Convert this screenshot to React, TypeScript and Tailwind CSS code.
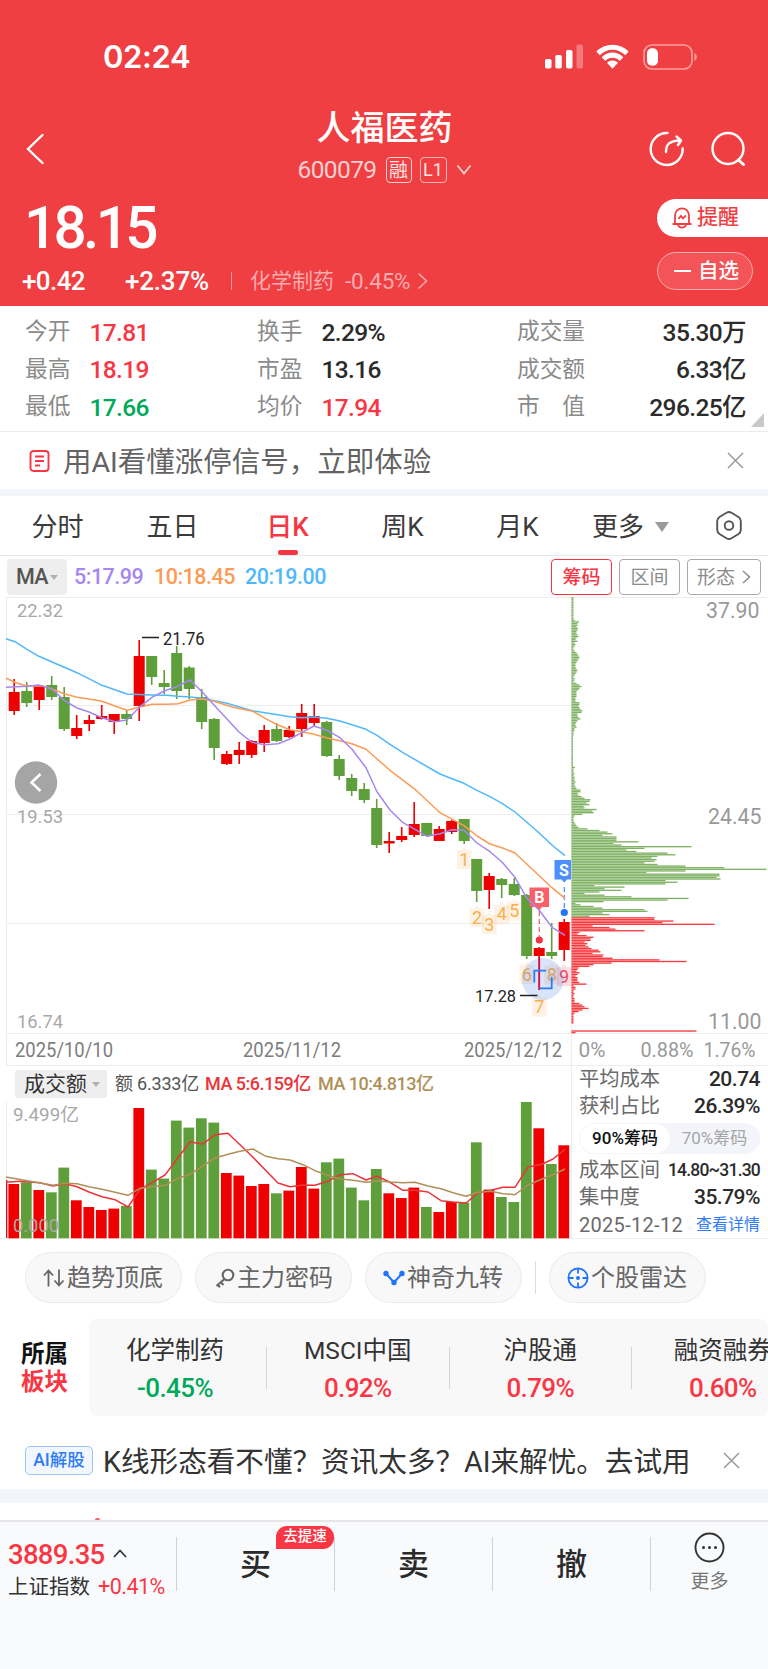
import React from 'react';
import clsx from 'clsx';

type Point = [number, number];

// [up, high, body top, body bottom, low, turnover bar height]
type Candle = [number, number, number, number, number, number];

const candles: Candle[] = [
  [1, 679, 692, 711, 715, 54.3],
  [0, 682, 691, 703, 707, 56],
  [1, 685, 686, 700, 710, 48.3],
  [0, 676, 685, 697, 700, 46],
  [0, 687, 697, 729, 731, 70.7],
  [1, 715, 728, 736, 739, 38],
  [1, 715, 720, 724, 731, 31.3],
  [1, 705, 716, 719, 719.5, 28.3],
  [1, 714, 714, 722, 734, 29.7],
  [0, 710, 714, 719, 725, 32.3],
  [1, 640, 656, 706, 721, 130.3],
  [0, 656, 656, 677, 685, 68.7],
  [0, 670, 683, 687, 694, 59.7],
  [0, 646, 653, 691, 699, 117.7],
  [0, 666, 667.5, 689, 699, 110.7],
  [0, 689, 697, 722, 729, 120],
  [0, 718, 719, 748, 760, 115.7],
  [1, 751, 754, 764, 765, 65.3],
  [1, 742, 750, 755, 764, 62.7],
  [1, 740, 741, 755, 758, 52.3],
  [1, 725, 730, 743, 752, 54.3],
  [0, 723, 729, 741, 742, 45],
  [1, 726, 730, 737, 738, 47.7],
  [1, 704, 713, 729, 737, 71.3],
  [1, 704, 716, 723, 727, 49.7],
  [0, 721, 722, 756, 757, 76],
  [0, 755, 759, 776, 780, 79.7],
  [0, 774, 778, 791, 796, 50.7],
  [0, 783, 789, 800, 803, 38],
  [0, 799, 808, 845, 848, 69.3],
  [1, 832, 841, 843.5, 853, 45],
  [1, 827, 836, 840, 842, 40.3],
  [1, 802, 824, 835, 837, 50.7],
  [0, 823, 823, 836, 836, 31.3],
  [1, 826, 829, 841, 841, 26.3],
  [1, 820, 821, 832, 834, 36.3],
  [0, 819, 819, 841, 844, 35.7],
  [0, 859, 859, 891, 902, 96],
  [1, 873, 876, 890, 909, 48.7],
  [0, 878, 879, 885, 898, 41.3],
  [0, 878, 884, 895, 896, 36.3],
  [0, 894, 895, 956, 959, 138.3],
  [1, 947, 948, 956, 990, 110],
  [0, 923, 952, 956, 959, 74.3],
  [1, 919, 922, 950, 961, 93],
];

const ma5: Point[] = [
  [6, 687.3], [27, 686.3], [39, 685], [52, 689], [64, 700.3], [77, 708], [89, 712], [102, 717.7], [115, 721.7],
  [127, 720], [140, 706.7], [152, 697.3], [164, 691], [177, 686.7], [190, 680], [202, 691.7], [217, 708.3],
  [227, 719], [239, 732], [252, 742.3], [265, 744.7], [278, 743.7], [290, 739], [302, 732.3], [314, 726],
  [327, 730.3], [340, 737.7], [352, 749.3], [366, 767.7], [377, 791.7], [390, 810], [403, 822.7], [415, 829.3],
  [427, 836.3], [440, 833.7], [452, 829.7], [464, 830.3], [477, 843], [490, 851.7], [502, 862], [515, 877.3],
  [527, 898.3], [539, 910], [552, 927.3], [565, 935.3],
];

const ma10: Point[] = [
  [6, 678.3], [16, 682.7], [27, 686], [42, 685.7], [52, 689], [64, 693.7], [77, 697.3], [89, 699], [102, 701.3],
  [115, 706], [127, 710.3], [140, 707], [152, 704.3], [167, 704.3], [178, 703.7], [190, 700], [202, 699],
  [214, 701.3], [233, 707.3], [253, 711.3], [265, 718.3], [278, 725], [290, 729.7], [302, 731.7], [314, 734.3],
  [327, 738], [340, 740.7], [352, 743.7], [366, 749.3], [390, 770.3], [415, 789.3], [440, 812.7], [464, 825.7],
  [477, 836], [490, 844], [502, 847.7], [515, 853], [552, 887.7], [565, 898.3],
];

const ma20: Point[] = [
  [6, 638.7], [15, 641.7], [27, 649.3], [39, 656.3], [52, 662], [77, 672.7], [102, 685.3], [127, 694], [152, 695],
  [167, 695.3], [178, 696.3], [190, 697], [202, 698.3], [227, 703.3], [252, 710.7], [265, 712.7], [290, 716.7],
  [302, 717.7], [314, 717], [327, 718.3], [340, 721], [352, 724.7], [366, 729.3], [377, 735.3], [390, 744.3],
  [403, 752.7], [440, 774], [452, 778.7], [464, 783.3], [477, 790.3], [490, 796.7], [502, 803.3], [515, 812],
  [537, 831], [553, 846], [565, 855.7],
];

const turnoverMa5: Point[] = [
  [6, 1182.3], [20, 1181.3], [40, 1182.7], [53, 1186], [65, 1183.7], [77, 1186.7], [89, 1192], [102, 1196.7],
  [115, 1199.7], [128, 1207], [140, 1189.3], [152, 1182.7], [165, 1175], [178, 1157.7], [190, 1142], [203, 1144],
  [215, 1134.7], [228, 1133.3], [240, 1144.7], [252, 1156.3], [278, 1183], [290, 1186.7], [303, 1185],
  [315, 1185.3], [328, 1181.3], [340, 1174.7], [353, 1173.7], [366, 1180], [377, 1176.3], [390, 1182.3],
  [403, 1190.3], [415, 1190.3], [428, 1192], [441, 1200.7], [453, 1202], [466, 1203], [478, 1193], [491, 1190.3],
  [503, 1187.3], [515, 1187.3], [528, 1167], [542, 1164.3], [553, 1159], [565, 1149.3],
];

const turnoverMa10: Point[] = [
  [6, 1177], [40, 1183], [53, 1185.3], [65, 1183.3], [77, 1183.7], [89, 1186.7], [102, 1189.3], [115, 1192.3],
  [128, 1195.3], [140, 1188.3], [152, 1186.7], [165, 1185.3], [178, 1178.3], [190, 1174.3], [215, 1158],
  [228, 1154.3], [240, 1151.3], [253, 1149], [266, 1156.3], [278, 1158.7], [290, 1160], [303, 1164.7],
  [315, 1170.7], [328, 1175.3], [340, 1179], [353, 1180.3], [366, 1182.3], [378, 1181], [390, 1182],
  [403, 1182.7], [415, 1182.3], [428, 1186], [441, 1188.7], [453, 1192.7], [466, 1196.3], [478, 1192.3],
  [491, 1191.3], [503, 1193.7], [515, 1194.7], [528, 1185], [542, 1179], [553, 1174.7], [565, 1169],
];

// Chip distribution, one bar per price step, from 37.90 down to 11.00
const chips: number[] = [
  2, 2, 2, 2, 2, 2, 2, 2, 2, 2, 2, 2, 2, 2, 3, 7.5, 6, 6, 5, 6.5, 6, 5, 5, 6, 7, 5, 4, 6, 3, 4,
  3, 2, 2, 3, 5, 6, 7, 8, 7, 6, 5, 4, 4, 4, 5, 6, 5, 4, 3, 2, 3, 3, 2, 5, 8, 10, 8, 7, 5, 5,
  5, 5, 4, 4, 4, 8, 8, 7, 8, 9, 11, 10, 6, 6, 7, 9, 6, 5, 4, 4, 5, 3, 3, 2, 2, 2, 1.5, 1.5, 1.5, 1.5,
  1.5, 1.5, 1.5, 1.5, 1.5, 1.5, 1.5, 1.5, 1.5, 1.5, 1.5, 1.5, 1.5, 1.5, 1.5, 3.5, 2, 2, 2, 3, 2, 3, 3, 3, 4, 3, 3, 4, 5, 9,
  9, 6, 7, 10, 13, 19, 18, 15, 18, 12, 13, 25, 21, 22, 11, 3, 2, 2, 2, 3, 4, 5, 7, 16, 28, 36, 41, 31, 45, 45,
  45, 67, 42, 50, 120, 73, 55, 65, 96, 104, 86, 80, 85, 83, 73, 86, 114, 153, 195, 114, 75, 148, 148, 145, 149, 94, 106, 94, 23, 53,
  33, 50, 28, 13, 33, 60, 117, 96, 32, 4, 9, 22, 31, 73, 76, 31, 38, 18, 83, 83, 102, 91, 143, 21, 38, 44, 73, 8, 6, 15,
  22, 19, 19, 13, 16, 14, 17, 20, 27, 29, 21, 32, 31, 41, 88, 115, 40, 22, 18, 7, 6, 5, 8, 6, 4, 6, 6, 6, 8, 15,
  2, 4, 4, 2, 2, 3, 2, 2, 3, 3, 3, 8, 11, 13, 17, 11, 7, 3, 2, 2, 2, 2, 2, 2, 0, 0, 0, 0, 125, 4,
];

const FIRST_PROFIT_CHIP = 198;

const nineTurns = [
  { n: '1', x: 464.3, y: 859 },
  { n: '2', x: 477, y: 917 },
  { n: '3', x: 489.3, y: 924 },
  { n: '4', x: 501.7, y: 913.7 },
  { n: '5', x: 514.3, y: 910.7 },
  { n: '6', x: 526.7, y: 974 },
  { n: '7', x: 539.3, y: 1006.7 },
  { n: '8', x: 551.7, y: 974.3 },
  { n: '9', x: 564, y: 976.3 },
];

const UP = '#ee0000';
const DOWN = '#5f9f3b';
const candleX = (i: number) => 14.2 + i * 12.5;
const toPoints = (pts: Point[]) => pts.map((p) => p.join(',')).join(' ');

interface LabelProps {
  x: number;
  y: number;
  w: number;
  size: number;
  fill: string;
  children: string;
}

// Chart label, x is the left edge and y the baseline
const Label: React.FC<LabelProps> = ({ x, y, w, size, fill, children }) => (
  <text x={x} y={y} fontSize={size} fill={fill} textLength={w} lengthAdjust="spacingAndGlyphs">
    {children}
  </text>
);

const StatusBar = () => (
  <div className="flex h-[113px] items-center justify-between pr-[70px] pl-[103px]">
    <span className="mt-[2px] font-['Inter'] text-[31px] font-semibold tracking-[-0.4px]">02:24</span>
    <svg width="153" height="26" viewBox="0 0 153 26" fill="white">
      <rect x="0" y="15" width="6.5" height="9.5" rx="1.8" />
      <rect x="10.3" y="11" width="6.5" height="13.5" rx="1.8" />
      <rect x="21" y="6" width="6.5" height="18.5" rx="1.8" />
      <rect x="31.5" y="0.5" width="6.5" height="24" rx="1.8" opacity="0.3" />
      <path d="M51.3 7.6a22.4 22.4 0 0 1 32.4 0l-3.5 3.7a17.3 17.3 0 0 0-25.4 0z" />
      <path d="M56.7 13.2a15 15 0 0 1 21.6 0l-3.6 3.8a9.8 9.8 0 0 0-14.4 0z" />
      <path d="M62 18.8a7.7 7.7 0 0 1 11 0l-5.5 5.9z" />
      <rect x="99" y="1" width="48" height="24" rx="8" fill="none" stroke="white" strokeWidth="1.6" opacity="0.5" />
      <rect x="102" y="4.3" width="11" height="17.4" rx="5" />
      <path d="M149.5 9.2c3 .8 3 6.8 0 7.6z" opacity="0.5" />
    </svg>
  </div>
);

const Header = () => (
  <header className="h-[306px] bg-[#f03f42] text-white">
    <StatusBar />
    <div className="flex h-[72px] items-center justify-between pr-[22px] pl-[26px]">
      <svg width="96" height="32" viewBox="0 0 96 32" fill="none" stroke="white" strokeWidth="2.4">
        <path d="M16.5 2 2 16l14.500 14" strokeLinecap="round" />
      </svg>
      <div className="-mt-[5px] flex flex-col items-center pr-[2px]">
        <h1 className="text-[34px] leading-[38px] font-medium">人福医药</h1>
        <div className="mt-[9px] flex h-[28px] items-center">
          <span className="text-[24.5px] tracking-[-0.6px] text-[#fbd0d1]">600079</span>
          <span className="ml-[9px] flex h-[26px] w-[26px] items-center justify-center rounded-[4px] border-[1.5px] border-[#fbd0d1] text-[19px] leading-none text-[#fde4e4]">融</span>
          <span className="ml-[8px] flex h-[26px] w-[27px] items-center justify-center rounded-[4px] border-[1.5px] border-[#f9b4b6] text-[18px] leading-none text-[#fde4e4]">L1</span>
          <svg className="ml-[9px]" width="16" height="12" viewBox="0 0 16 12" fill="none" stroke="#fbd0d1" strokeWidth="1.8">
            <path d="m1.5 1.5 6.5 8 6.5-8" />
          </svg>
        </div>
      </div>
      <div className="flex items-center gap-[25px]">
        <svg width="36" height="36" viewBox="0 0 36 36" fill="none" stroke="white" strokeWidth="2.4" strokeLinecap="round" strokeLinejoin="round">
          <path d="M18.500 2A16 16 0 1 0 33.700 17.500" />
          <path d="M17 21C17 13 20.500 10 31 9.500" />
          <path d="m27.500 5.500 4.500 4-3 4.500" />
        </svg>
        <svg width="36" height="36" viewBox="0 0 36 36" fill="none" stroke="white" strokeWidth="2.4" strokeLinecap="round">
          <circle cx="18" cy="17.500" r="15.500" />
          <path d="m28.500 29 5 4.500" strokeWidth="3" />
        </svg>
      </div>
    </div>
    <div className="flex justify-between pt-[5px]">
      <div>
        <div className="h-[74px] pl-[24px] text-[58.500px] leading-[76px] font-medium tracking-[-3.700px]">18.15</div>
        <div className="flex h-[34px] items-center pl-[22px] text-[26px] leading-none">
          <span className="w-[103px] font-medium tracking-[-0.6px]">+0.42</span>
          <span className="w-[106px] font-medium tracking-[-0.2px]">+2.37%</span>
          <span className="h-[18px] w-px bg-[#f79a9c]" />
          <span className="ml-[18px] text-[21px] text-[#f9abad]">化学制药</span>
          <span className="ml-[11px] text-[22.500px] tracking-[-0.2px] text-[#f9abad]">-0.45%</span>
          <svg className="ml-[7px]" width="12" height="18" viewBox="0 0 12 18" fill="none" stroke="#f9abad" strokeWidth="1.6">
            <path d="m1.500 1.500 8 7.500-8 7.500" />
          </svg>
        </div>
      </div>
      <div className="mt-[9px] flex flex-col items-start gap-[15px]">
        <button className="flex h-[38px] w-[111px] items-center rounded-l-full bg-white pl-[15px] text-[21px] font-medium text-[#f03f42]">
          <svg width="20" height="22" viewBox="0 0 20 22" fill="none" stroke="#f03f42" strokeWidth="1.8">
            <path d="M3 16.500V8.500a7 7.200 0 0 1 14 0v8M.5 17h19M6 18c1.500 3.500 6.500 3.500 8 0" />
            <path d="m6.500 11.800 2.500-2.800 2 2.500 3-3" />
          </svg>
          <span className="ml-[5px]">提醒</span>
        </button>
        <button className="flex h-[38px] w-[96px] items-center rounded-full border border-[#f9abad] bg-[#f25457] pl-[16px] text-[20.5px] font-medium">
          <span className="h-[2px] w-[17px] bg-white" />
          <span className="ml-[7px]">自选</span>
        </button>
      </div>
    </div>
  </header>
);

const quotes = [
  { label: '今开', value: '17.81', tone: 'up' },
  { label: '换手', value: '2.29%', tone: 'flat' },
  { label: '成交量', value: '35.30万', tone: 'flat' },
  { label: '最高', value: '18.19', tone: 'up' },
  { label: '市盈', value: '13.16', tone: 'flat' },
  { label: '成交额', value: '6.33亿', tone: 'flat' },
  { label: '最低', value: '17.66', tone: 'down' },
  { label: '均价', value: '17.94', tone: 'up' },
  { label: '市　值', value: '296.25亿', tone: 'flat' },
];

const Quotes = () => (
  <section className="relative h-[126px] border-b border-[#ebebeb] pt-[8px]">
    <div className="grid auto-rows-[37.5px] grid-cols-[232px_260px_229px] pl-[25px]">
      {quotes.map((q, i) => (
        <div key={q.label} className="flex items-center leading-none">
          <span className="text-[22.7px] text-[#8b8b8b]">{q.label}</span>
          <span
            className={clsx(
              'text-[24.5px] font-medium tracking-[-0.6px]',
              i % 3 === 2 ? 'ml-auto' : 'ml-[19px]',
              q.tone === 'up' && 'text-[#f93744]',
              q.tone === 'down' && 'text-[#00a859]',
              q.tone === 'flat' && 'text-[#2b2b2b]',
            )}
          >
            {q.value}
          </span>
        </div>
      ))}
    </div>
    <svg className="absolute right-[4px] bottom-[4px]" width="13" height="14" viewBox="0 0 13 14">
      <path d="M13 0v14H0z" fill="#c9c9c9" />
    </svg>
  </section>
);

const CloseIcon = () => (
  <svg width="17" height="17" viewBox="0 0 17 17" stroke="#9a9a9a" strokeWidth="1.5">
    <path d="m1 1 15 15M16 1 1 16" />
  </svg>
);

const SignalBanner = () => (
  <div className="flex h-[57px] items-center pr-[24px] pl-[29px]">
    <svg width="21" height="22" viewBox="0 0 21 22" fill="none" stroke="#f93744" strokeWidth="1.9">
      <rect x="1.500" y="1" width="18" height="20" rx="3" />
      <path d="M6 6.500h9M6 11h9M6 15.500h5" />
    </svg>
    <span className="mt-[5px] ml-[13px] text-[28.500px] leading-none text-[#636363]">用AI看懂涨停信号，立即体验</span>
    <span className="ml-auto"><CloseIcon /></span>
  </div>
);

const periods = ['分时', '五日', '日K', '周K', '月K'];

const PeriodTabs = () => (
  <nav className="flex h-[60px] items-center border-b border-[#e8e8e8] text-[26px] leading-none text-[#3b3b3b]">
    {periods.map((p) => (
      <div
        key={p}
        className={clsx('relative flex h-full w-[115px] items-center justify-center pt-[2px]', p === '日K' && 'font-medium text-[#f93744]')}
      >
        {p}
        {p === '日K' && <span className="absolute bottom-0 h-[5px] w-[20px] rounded-[2px] bg-[#f93744]" />}
      </div>
    ))}
    <span className="mt-[2px] ml-[17px]">更多</span>
    <svg className="mt-[2px] ml-[11px]" width="14" height="10" viewBox="0 0 14 10">
      <path d="M0 0h14L7 10z" fill="#9a9a9a" />
    </svg>
    <svg className="ml-[47px]" width="26" height="29" viewBox="0 0 26 29" fill="none" stroke="#555" strokeWidth="1.9">
      <path d="M10.500 1.800a5 5 0 0 1 5 0l7 4.200a5 5 0 0 1 2.300 4v9a5 5 0 0 1-2.300 4l-7 4.200a5 5 0 0 1-5 0l-7-4.200a5 5 0 0 1-2.300-4v-9a5 5 0 0 1 2.300-4z" />
      <circle cx="13" cy="14.500" r="4.300" />
    </svg>
  </nav>
);

const IndicatorRow = () => (
  <div className="flex h-[40px] items-center pr-[7px] pl-[7px] text-[21.5px] leading-none font-medium tracking-[-0.5px]">
    <span className="flex h-[36px] w-[60px] items-center justify-center rounded-[4px] bg-[#eeeeee] text-[#555]">
      MA
      <svg className="ml-[2px]" width="8" height="5" viewBox="0 0 8 5">
        <path d="M0 0h8L4 5z" fill="#b0b0b0" />
      </svg>
    </span>
    <span className="ml-[7px] w-[80px] text-[#a687f2]">5:17.99</span>
    <span className="w-[91px] text-[#fb9b58]">10:18.45</span>
    <span className="text-[#4fb8fb]">20:19.00</span>
    <div className="ml-auto flex gap-[7px] text-[19px] font-normal tracking-normal text-[#8b8b8b]">
      <span className="flex h-[36px] w-[61px] items-center justify-center rounded-[4px] border border-[#f93744] font-medium text-[#f93744]">筹码</span>
      <span className="flex h-[36px] w-[61px] items-center justify-center rounded-[4px] border border-[#a9a9a9]">区间</span>
      <span className="flex h-[36px] w-[74px] items-center justify-center rounded-[4px] border border-[#a9a9a9]">
        形态
        <svg className="ml-[7px]" width="9" height="14" viewBox="0 0 9 14" fill="none" stroke="#8b8b8b" strokeWidth="1.500">
          <path d="m1 1 6.500 6L1 13" />
        </svg>
      </span>
    </div>
  </div>
);

const PriceChart = () => (
  <svg className="block" width="768" height="469" viewBox="0 597 768 469">
    <g stroke="#ededed" strokeWidth="1.2">
      <path d="M6 597.500H768M6 705.500H571M6 814.500H571M6 923.500H571M6 1033.500H768M6 1065.500H768M6.500 597V1066M571.500 597V1066" />
    </g>

    <Label x={17} y={617} w={46} size={19} fill="#a9a9a9">22.32</Label>
    <Label x={17} y={822.500} w={46} size={19} fill="#a9a9a9">19.53</Label>
    <Label x={17} y={1028} w={46} size={19} fill="#a9a9a9">16.74</Label>

    {/* Candles */}
    {candles.map(([up, high, top, bottom, low], i) => (
      <g key={i} fill={up ? UP : DOWN}>
        <rect x={candleX(i) - 0.8} y={high} width={1.6} height={low - high} />
        <rect x={candleX(i) - 5.5} y={top} width={11} height={bottom - top} />
      </g>
    ))}

    {/* Nine-turn counters */}
    {nineTurns.map(({ n, x, y }) => (
      <g key={n}>
        <path
          d={`M${x - 7.500} ${y - 9}h5l2.500-3 2.500 3h5v19h-15z`}
          fill={n === '9' ? '#f93744' : '#fb9b3c'}
          opacity={n === '9' ? 0.16 : 0.13}
        />
        <text x={x} y={y + 6.500} fontSize={18} textAnchor="middle" fill={n === '9' ? '#ee4a62' : '#f8b04a'}>
          {n}
        </text>
      </g>
    ))}

    {/* Buy and sell markers */}
    <circle cx="542.700" cy="979" r="21" fill="#3f78e8" opacity="0.2" />
    <path d="M539.300 957V990" stroke="#d01040" strokeWidth="1.600" />
    <path d="M534.300 982.500V970.700H546M551.700 976.700V988.300H539.500" fill="none" stroke="#2b7bf8" strokeWidth="1.800" />
    <path d="M529.500 887.500h19.500v19.500h-7l-2.700 3.500-2.800-3.500h-7z" fill="#f9606a" />
    <text x="539.300" y="903" fontSize="16" fontWeight="700" textAnchor="middle" fill="white">B</text>
    <path d="M539.300 911V937" stroke="#f0606c" strokeWidth="1.200" strokeDasharray="5 3" />
    <circle cx="539.300" cy="940" r="3.600" fill="#ef3447" />
    <path d="M554.500 860h16.500v19.500h-4l-2.700 3-2.800-3h-7z" fill="#4d8ffb" />
    <text x="564" y="875.500" fontSize="16" fontWeight="700" textAnchor="middle" fill="white">S</text>
    <path d="M564.300 887V909" stroke="#3f85f8" strokeWidth="1.200" strokeDasharray="5 3" />
    <circle cx="564.300" cy="912.500" r="3.600" fill="#1f74fb" />

    {/* Moving averages */}
    <g fill="none" strokeWidth="1.500" strokeLinejoin="round">
      <polyline points={toPoints(ma20)} stroke="#4fb8fb" />
      <polyline points={toPoints(ma10)} stroke="#fb9b58" />
      <polyline points={toPoints(ma5)} stroke="#a687f2" />
    </g>

    <path d="M142 637.500h17M520 995.500h17.500" stroke="#222" strokeWidth="1.400" />
    <Label x={163} y={644.500} w={41.500} size={17.500} fill="#222">21.76</Label>
    <Label x={475} y={1001.500} w={41} size={17} fill="#222">17.28</Label>

    {/* Chip distribution */}
    {chips.map((len, i) => (
      <rect
        key={i}
        x={571.500}
        y={597 + i * 1.617}
        width={len}
        height={1.350}
        fill={i < FIRST_PROFIT_CHIP ? '#7fb263' : '#f63c40'}
      />
    ))}

    <Label x={706} y={618} w={53.500} size={22} fill="#999">37.90</Label>
    <Label x={708} y={824} w={53.500} size={22} fill="#999">24.45</Label>
    <Label x={708} y={1029} w={53.500} size={22} fill="#999">11.00</Label>

    <g>
      <circle cx="36" cy="782.500" r="21.200" fill="#a5a5a5" />
      <path d="m40.500 774-9 8.500 9 8.500" fill="none" stroke="white" strokeWidth="2.600" />
    </g>

    <Label x={15} y={1057} w={98} size={19.500} fill="#7d7d7d">2025/10/10</Label>
    <Label x={243} y={1057} w={98} size={19.500} fill="#7d7d7d">2025/11/12</Label>
    <Label x={464} y={1057} w={98} size={19.500} fill="#7d7d7d">2025/12/12</Label>
    <Label x={578.500} y={1057} w={27} size={19.500} fill="#999">0%</Label>
    <Label x={640.500} y={1057} w={53} size={19.500} fill="#999">0.88%</Label>
    <Label x={703.500} y={1057} w={52} size={19.500} fill="#999">1.76%</Label>
  </svg>
);

const TurnoverPane = () => (
  <div className="w-[571px]">
    <div className="flex h-[36px] items-center pl-[15px] text-[18px] leading-none font-medium tracking-[-0.5px] whitespace-nowrap">
      <span className="flex h-[28px] w-[92px] items-center rounded-[3px] bg-[#eeeeee] pl-[9px] text-[21px] font-normal tracking-normal text-[#333]">
        成交额
        <svg className="ml-[5px]" width="8" height="5" viewBox="0 0 8 5">
          <path d="M0 0h8L4 5z" fill="#b0b0b0" />
        </svg>
      </span>
      <span className="ml-[8px] w-[90px] font-normal tracking-[-0.2px] text-[#555]">额 6.333亿</span>
      <span className="w-[113px] text-[#ea3438]">MA 5:6.159亿</span>
      <span className="text-[#b08f58]">MA 10:4.813亿</span>
    </div>
    <svg className="block" width="571" height="137" viewBox="0 1102 571 137">
      <path d="M6.500 1102V1238" stroke="#ededed" />
      <Label x={13} y={1121} w={66} size={18.500} fill="#a9a9a9">9.499亿</Label>
      <rect x="6" y="1180" width="1.300" height="58" fill={UP} />
      {candles.map(([up, , , , , amount], i) => (
        <rect key={i} x={candleX(i) - 5.800} y={1238.300 - amount} width={10.800} height={amount} fill={up ? UP : DOWN} />
      ))}
      <g fill="none" strokeWidth="1.500" strokeLinejoin="round">
        <polyline points={toPoints(turnoverMa5)} stroke="#ea3438" />
        <polyline points={toPoints(turnoverMa10)} stroke="#b08f58" />
      </g>
      <Label x={13} y={1232} w={46} size={18.500} fill="#b0a8a0">0.000</Label>
    </svg>
  </div>
);

const ChipStats = () => (
  <div className="w-[197px] border-l border-[#ededed] pr-[8px] pl-[7px] leading-none text-[#6a6a6a]">
    <div className="flex h-[27px] items-center justify-between text-[20.300px]">
      平均成本<span className="text-[21px] font-medium tracking-[-0.5px] text-[#2b2b2b]">20.74</span>
    </div>
    <div className="flex h-[27px] items-center justify-between text-[20.300px]">
      获利占比<span className="text-[21px] font-medium tracking-[-0.5px] text-[#2b2b2b]">26.39%</span>
    </div>
    <div className="mt-[3px] flex h-[31px] items-center rounded-full bg-[#f3f5fa] p-px text-[17px] tracking-[-0.2px]">
      <span className="flex h-full w-[90px] items-center justify-center rounded-full bg-white font-medium tracking-normal text-[#111]">90%筹码</span>
      <span className="flex-1 text-center tracking-normal text-[#a5a5a5]">70%筹码</span>
    </div>
    <div className="mt-[3px] flex h-[27px] items-center justify-between text-[20.300px]">
      成本区间<span className="text-[17.500px] font-medium tracking-[-0.800px] text-[#2b2b2b]">14.80~31.30</span>
    </div>
    <div className="flex h-[27px] items-center justify-between text-[20.300px]">
      集中度<span className="text-[21px] font-medium tracking-[-0.5px] text-[#2b2b2b]">35.79%</span>
    </div>
    <div className="flex h-[27px] items-center justify-between text-[20px] tracking-[0.3px]">
      2025-12-12<span className="text-[16px] tracking-normal text-[#2f7cf6]">查看详情</span>
    </div>
  </div>
);

const toolPill = 'flex h-[51px] w-[157px] items-center rounded-full border border-[#ebebeb] bg-[#f8f8f8] pl-[17px]';

const Tools = () => (
  <div className="flex h-[80px] items-center gap-[13px] pb-[3px] pl-[25px] text-[24px] leading-none text-[#666]">
    <div className={toolPill}>
      <svg width="22" height="18" viewBox="0 0 22 18" fill="none" stroke="#666" strokeWidth="1.800">
        <path d="M5.500 17.500V1.500M1 6.500l4.500-5L10 6.500M16 .5v16M11.500 11.500l4.500 5 4.500-5" />
      </svg>
      <span className="ml-[2px]">趋势顶底</span>
    </div>
    <div className={toolPill}>
      <svg className="ml-[2px]" width="20" height="20" viewBox="0 0 20 20" fill="none" stroke="#666" strokeWidth="2.100">
        <circle cx="13" cy="7" r="5.300" />
        <path d="M9.500 11 1.500 18M5.500 14l3 3M2.500 16.500 5 19.200" />
      </svg>
      <span className="ml-[2px]">主力密码</span>
    </div>
    <div className={toolPill}>
      <svg width="22" height="18" viewBox="0 0 22 18" fill="#1f74fb" stroke="#1f74fb" strokeWidth="2">
        <path d="m3 4.500 8 9L19 4.500" fill="none" />
        <circle cx="3" cy="4.500" r="1.700" />
        <circle cx="11" cy="13.500" r="1.700" />
        <circle cx="19" cy="4.500" r="1.700" />
      </svg>
      <span className="ml-[2px]">神奇九转</span>
    </div>
    <span className="h-[33px] w-px bg-[#dcdcdc]" />
    <div className={toolPill}>
      <svg width="22" height="22" viewBox="0 0 22 22" fill="none" stroke="#1f74fb" strokeWidth="1.800">
        <circle cx="11" cy="11" r="9.600" />
        <path d="M11 1v5.500M11 15.500V21M1 11h5.500M15.500 11H21" />
        <circle cx="11" cy="11" r="2" fill="#1f74fb" stroke="none" />
      </svg>
      <span className="ml-[2px]">个股雷达</span>
    </div>
  </div>
);

const sectors = [
  { name: '化学制药', change: '-0.45%' },
  { name: 'MSCI中国', change: '0.92%' },
  { name: '沪股通', change: '0.79%' },
  { name: '融资融券', change: '0.60%' },
];

const Sectors = () => (
  <div className="flex h-[97px] items-center">
    <div className="w-[89px] pl-[21px] text-[23.500px] leading-[28px] font-bold">
      <div className="text-[#111]">所属</div>
      <div className="text-[#f93744]">板块</div>
    </div>
    <div className="flex h-full flex-1 overflow-hidden rounded-[8px] bg-[#f8f8f9]">
      {sectors.map((s, i) => (
        <div key={s.name} className={clsx('flex shrink-0 items-center', i === 0 ? 'w-[178px]' : 'w-[182.5px]')}>
          <div className={clsx('flex-1 pt-[5px] text-center leading-none whitespace-nowrap', i === 0 && 'pr-[5px]')}>
            <div className="text-[24.500px] text-[#333]">{s.name}</div>
            <div className={clsx('mt-[12px] text-[26px] font-medium tracking-[-0.6px]', s.change.startsWith('-') ? 'text-[#00a859]' : 'text-[#f93744]')}>
              {s.change}
            </div>
          </div>
          <span className="h-[42px] w-px bg-[#d5d5d5]" />
        </div>
      ))}
    </div>
  </div>
);

const AiBanner = () => (
  <div className="mt-[31px] flex h-[42px] items-start pr-[28px] pl-[25px]">
    <span className="-mt-px flex h-[29px] w-[68px] items-center justify-center rounded-[5px] border border-[#9cc3fb] bg-[#f2f7ff] text-[17.500px] leading-none font-medium text-[#2f7cf6]">AI解股</span>
    <span className="ml-[10px] text-[28.600px] leading-[30px] whitespace-nowrap text-[#333]">K线形态看不懂？资讯太多？AI来解忧。去试用</span>
    <span className="mt-[5px] ml-auto"><CloseIcon /></span>
  </div>
);

const BottomBar = () => (
  <footer className="flex h-[149px] border-t-2 border-[#e6e6e8] bg-[#f9fafc] leading-none">
    <div className="w-[176px] pt-[19px] pl-[8px]">
      <div className="flex items-center text-[27.500px] font-medium tracking-[-0.700px] text-[#f93744]">
        3889.35
        <svg className="mt-[-2px] ml-[8px]" width="14" height="9" viewBox="0 0 14 9" fill="none" stroke="#333" strokeWidth="1.800">
          <path d="m1 8 6-6.500L13 8" />
        </svg>
      </div>
      <div className="mt-[7px] flex items-baseline text-[20.500px] text-[#333]">
        上证指数<span className="ml-[8px] text-[21.500px] tracking-[-0.5px] text-[#f93744]">+0.41%</span>
      </div>
    </div>
    {['买', '卖', '撤'].map((action) => (
      <div key={action} className="relative mt-[15px] flex h-[54px] w-[158px] items-center justify-center border-l border-[#d3d3d6] text-[31px] font-medium text-[#2b2b2b]">
        {action}
        {action === '买' && (
          <span className="absolute top-[-11px] left-[99px] flex h-[23px] w-[58px] items-center justify-center rounded-[11px] rounded-bl-none bg-[#f93744] text-[14.500px] text-white">
            去提速
          </span>
        )}
      </div>
    ))}
    <div className="mt-[15px] flex h-[54px] flex-1 flex-col items-center border-l border-[#d3d3d6] text-[19px] text-[#777]">
      <svg className="-mt-[5px] shrink-0" width="31" height="31" viewBox="0 0 31 31" fill="none" stroke="#333" strokeWidth="1.900">
        <circle cx="15.500" cy="15.500" r="14" />
        <path d="M9.500 15.500h0M15.500 15.500h0M21.500 15.500h0" strokeWidth="3" strokeLinecap="round" />
      </svg>
      <span className="mt-[9px]">更多</span>
    </div>
  </footer>
);

export default function App() {
  return (
    <div className="h-[1669px] w-[768px] overflow-hidden bg-white font-['Roboto','Noto_Sans_CJK_SC',sans-serif]">
      <Header />
      <Quotes />
      <SignalBanner />
      <div className="h-[7px] bg-[#f3f5fa]" />
      <PeriodTabs />
      <div className="h-px" />
      <IndicatorRow />
      <PriceChart />
      <div className="flex h-[173px] border-b border-[#ededed]">
        <TurnoverPane />
        <ChipStats />
      </div>
      <Tools />
      <Sectors />
      <AiBanner />
      <div className="h-[14px] bg-[#f3f5fa]" />
      <div className="flex h-[17px] items-end pl-[95px]">
        <span className="h-[2px] w-[5px] rounded-t-full bg-[#f9606a]" />
      </div>
      <BottomBar />
    </div>
  );
}
